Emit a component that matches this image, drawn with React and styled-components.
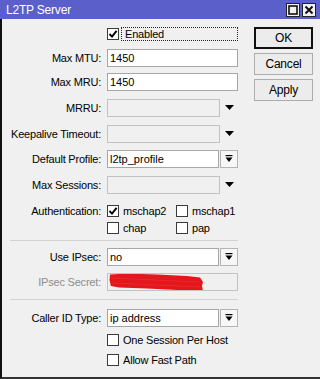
import React from 'react'
import styled, { createGlobalStyle } from 'styled-components'

const GlobalStyle = createGlobalStyle`
  html, body { margin: 0; padding: 0; background: #f0f0f0; }
  body { font-family: "Liberation Sans", Arial, sans-serif; font-size: 11px; color: #000; }
`

const Window = styled.div`
  width: 320px;
  height: 379px;
  display: flex;
  flex-direction: column;
  background: #f0f0f0;
  overflow: hidden;
`

const TitleBar = styled.div`
  height: 19px;
  flex: none;
  background: #5a5fc9;
  display: flex;
  align-items: center;
  justify-content: space-between;
  padding: 0 4px 0 6px;
`

const Title = styled.span`
  color: #fff;
  font-size: 12px;
  letter-spacing: -0.2px;
`

const TitleButtons = styled.div`
  display: flex;
  gap: 2px;
`

const TitleButton = styled.div`
  box-sizing: border-box;
  width: 14px;
  height: 14px;
  background: #f0f0f0;
  border: 1px solid #222;
  display: flex;
  align-items: center;
  justify-content: center;
`

const Body = styled.div`
  flex: 1;
  display: flex;
  align-items: flex-start;
  padding-top: 8px;
  border-left: 2px solid #111;
  border-bottom: 2px solid #333;
`

const Form = styled.div`
  width: 236px;
  display: flex;
  flex-direction: column;
`

const Row = styled.div`
  display: grid;
  grid-template-columns: 99px 131px;
  column-gap: 6px;
  align-items: center;
  height: ${p => p.$h || 18}px;
  margin-top: ${p => p.$mt || 0}px;
`

const Label = styled.label`
  text-align: right;
  white-space: nowrap;
  letter-spacing: -0.2px;
  color: ${p => (p.$disabled ? '#8d8d8d' : '#000')};
`

const Field = styled.div`
  display: flex;
  align-items: center;
  height: 100%;
`

const Input = styled.div`
  position: relative;
  box-sizing: border-box;
  width: ${p => p.$w || 131}px;
  height: 18px;
  padding-left: 2px;
  display: flex;
  align-items: center;
  background: ${p => (p.$disabled ? '#f0f0f0' : '#fff')};
  border: 1px solid ${p => (p.$disabled ? '#c2c2c2' : '#a6a6a6')};
  color: ${p => (p.$disabled ? '#6d6d6d' : '#000')};
  white-space: nowrap;
  overflow: hidden;
`

const DropButton = styled.div`
  box-sizing: border-box;
  width: 18px;
  height: 18px;
  margin-left: 1px;
  background: #f7f7f7;
  border: 1px solid #b4b4b4;
  display: flex;
  align-items: center;
  justify-content: center;
`

const ArrowSlot = styled.div`
  width: 18px;
  height: 18px;
  display: flex;
  align-items: center;
  justify-content: center;
  padding-bottom: 2px;
  box-sizing: border-box;
`

const Box = styled.span`
  box-sizing: border-box;
  width: 12px;
  height: 12px;
  flex: none;
  border: 1px solid #3a3a3a;
  background: #fff;
  display: inline-flex;
  align-items: center;
  justify-content: center;
`

const CheckItem = styled.div`
  display: flex;
  align-items: center;
  gap: 4px;
  white-space: nowrap;
  letter-spacing: -0.2px;
`

const CheckGrid = styled.div`
  display: grid;
  grid-template-columns: 69px 62px;
`

const FocusText = styled.span`
  flex: 1;
  box-sizing: border-box;
  height: 14px;
  margin-left: 2px;
  padding-left: 3px;
  border: 1px dotted #222;
  display: flex;
  align-items: center;
  letter-spacing: -0.2px;
`

const Divider = styled.div`
  height: 1px;
  margin: ${p => p.$mt}px 0 0 8px;
  width: 228px;
  background: #d2d2d2;
`

const Scribble = styled.svg`
  position: absolute;
  left: -1px;
  top: -1px;
`

const Actions = styled.div`
  margin-left: 16px;
  display: flex;
  flex-direction: column;
  gap: 4px;
`

const Button = styled.button`
  box-sizing: border-box;
  width: 59px;
  height: 22px;
  padding: 0;
  font-family: inherit;
  font-size: 12px;
  letter-spacing: -0.2px;
  color: #000;
  background: #ececec;
  border: 1px solid ${p => (p.$default ? '#111' : '#adadad')};
  box-shadow: ${p => (p.$default ? 'inset 0 0 0 1px #111' : 'none')};
`

const Check = ({ on }) => (
  <Box>
    {on && (
      <svg width="10" height="10" viewBox="0 0 10 10">
        <path d="M1.5 5 L4 7.6 L8.6 1.8" fill="none" stroke="#000" strokeWidth="1.9" />
      </svg>
    )}
  </Box>
)

const Triangle = () => (
  <svg width="9" height="5" viewBox="0 0 9 5">
    <path d="M0 0 H9 L4.5 5 Z" fill="#000" />
  </svg>
)

const DropIcon = () => (
  <svg width="8" height="8" viewBox="0 0 8 8">
    <rect x="0.5" y="0" width="7" height="1.2" fill="#000" />
    <path d="M0.5 2.5 H7.5 L4 7 Z" fill="#000" />
  </svg>
)

const Select = ({ value }) => (
  <Field>
    <Input $w={112}>{value}</Input>
    <DropButton>
      <DropIcon />
    </DropButton>
  </Field>
)

const Empty = () => (
  <Field>
    <Input $w={113} $disabled />
    <ArrowSlot>
      <Triangle />
    </ArrowSlot>
  </Field>
)

export default function App() {
  return (
    <>
      <GlobalStyle />
      <Window>
        <TitleBar>
          <Title>L2TP Server</Title>
          <TitleButtons>
            <TitleButton>
              <svg width="10" height="10" viewBox="0 0 10 10">
                <rect x="1" y="1" width="8" height="8" fill="none" stroke="#111" strokeWidth="1.6" />
              </svg>
            </TitleButton>
            <TitleButton>
              <svg width="10" height="10" viewBox="0 0 10 10">
                <path d="M1.5 1.5 L8.5 8.5 M8.5 1.5 L1.5 8.5" stroke="#111" strokeWidth="2" />
              </svg>
            </TitleButton>
          </TitleButtons>
        </TitleBar>
        <Body>
          <Form>
            <Row $h={14}>
              <span />
              <Field>
                <Check on />
                <FocusText>Enabled</FocusText>
              </Field>
            </Row>
            <Row $mt={8}>
              <Label>Max MTU:</Label>
              <Field><Input>1450</Input></Field>
            </Row>
            <Row $mt={6}>
              <Label>Max MRU:</Label>
              <Field><Input>1450</Input></Field>
            </Row>
            <Row $mt={8}>
              <Label>MRRU:</Label>
              <Empty />
            </Row>
            <Row $mt={8}>
              <Label>Keepalive Timeout:</Label>
              <Empty />
            </Row>
            <Row $mt={7}>
              <Label>Default Profile:</Label>
              <Select value="l2tp_profile" />
            </Row>
            <Row $mt={8}>
              <Label>Max Sessions:</Label>
              <Empty />
            </Row>
            <Row $mt={10} $h={13}>
              <Label>Authentication:</Label>
              <CheckGrid>
                <CheckItem><Check on />mschap2</CheckItem>
                <CheckItem><Check />mschap1</CheckItem>
              </CheckGrid>
            </Row>
            <Row $mt={4} $h={13}>
              <span />
              <CheckGrid>
                <CheckItem><Check />chap</CheckItem>
                <CheckItem><Check />pap</CheckItem>
              </CheckGrid>
            </Row>
            <Divider $mt={6} />
            <Row $mt={7}>
              <Label>Use IPsec:</Label>
              <Select value="no" />
            </Row>
            <Row $mt={7}>
              <Label $disabled>IPsec Secret:</Label>
              <Field>
                <Input $disabled>
                  F
                  <Scribble width="131" height="18" viewBox="0 0 131 18">
                    <path
                      d="M3 1.5 L20 0.5 L50 1.5 L80 3 L93 4.5 L96 9 L95 13 L96 18 L70 17 L40 15.5 L12 14.5 L4 13 L2.5 7 Z"
                      fill="#e3171d"
                    />
                    <path d="M4 5 L92 9 M5 10 L93 14" stroke="#f23a2a" strokeWidth="1" opacity="0.5" />
                  </Scribble>
                </Input>
              </Field>
            </Row>
            <Divider $mt={8} />
            <Row $mt={9}>
              <Label>Caller ID Type:</Label>
              <Select value="ip address" />
            </Row>
            <Row $mt={6} $h={14}>
              <span />
              <CheckItem><Check />One Session Per Host</CheckItem>
            </Row>
            <Row $mt={6} $h={14}>
              <span />
              <CheckItem><Check />Allow Fast Path</CheckItem>
            </Row>
          </Form>
          <Actions>
            <Button $default>OK</Button>
            <Button>Cancel</Button>
            <Button>Apply</Button>
          </Actions>
        </Body>
      </Window>
    </>
  )
}
